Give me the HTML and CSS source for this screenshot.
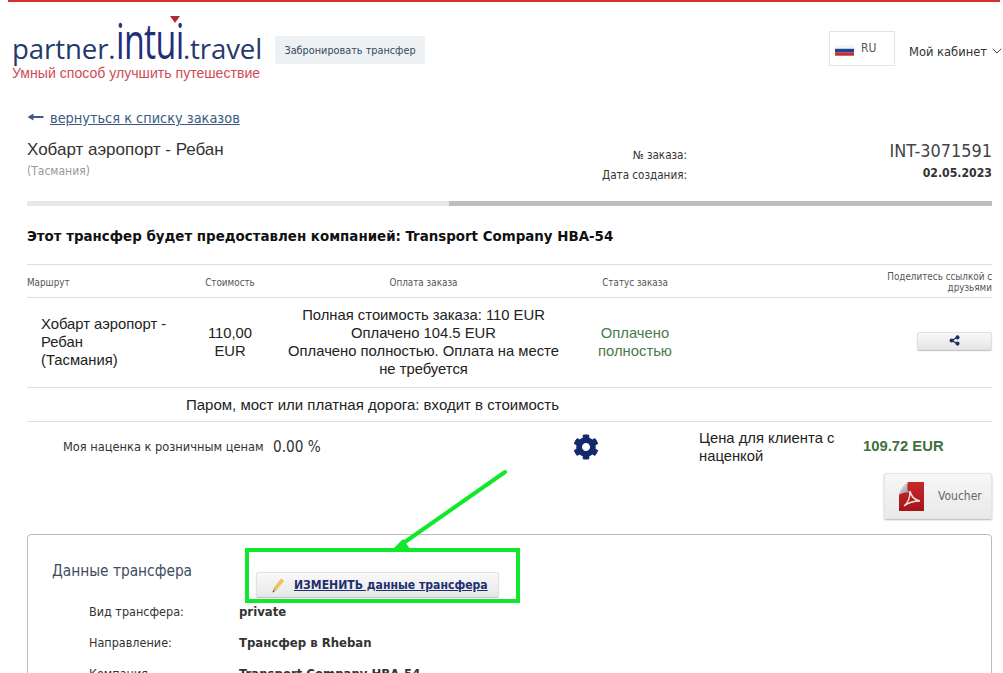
FILE: index.html
```html
<!DOCTYPE html>
<html lang="ru">
<head>
    <meta charset="UTF-8">
    <title>partner.intui.travel</title>
    <link rel="stylesheet" href="styles.css">
</head>
<body>
    <div class="top-line"></div>

    <header class="header">
        <a class="logo">
            <span class="logo-name">partner.<span class="logo-intui">intui</span>.travel</span>
            <span class="logo-slogan">Умный способ улучшить путешествие</span>
        </a>
        <a class="book-button">Забронировать трансфер</a>
        <div class="lang">
            <svg class="flag" viewBox="0 0 20 11"><rect width="20" height="3.7" fill="#f4f4f6"/><rect y="3.7" width="20" height="3.7" fill="#24408e"/><rect y="7.4" width="20" height="3.6" fill="#c0303a"/></svg>
            <span>RU</span>
        </div>
        <div class="cabinet">Мой кабинет
            <svg class="chevron" viewBox="0 0 10 6"><path d="M.7.8 5 5l4.3-4.2" fill="none" stroke="#444" stroke-width="1"/></svg>
        </div>
    </header>

    <main class="content">
        <a class="back-link">
            <svg class="back-arrow" viewBox="0 0 16 10"><path d="M0 5 6 1.5V4H16V6H6V8.5Z" fill="#3f5c85"/></svg>
            <span>вернуться к списку заказов</span>
        </a>

        <div class="order-head">
            <div class="order-title">
                <div class="order-route">Хобарт аэропорт - Ребан</div>
                <div class="order-region">(Тасмания)</div>
            </div>
            <div class="order-labels">
                <div>№ заказа:</div>
                <div>Дата создания:</div>
            </div>
            <div class="order-values">
                <div class="order-number">INT-3071591</div>
                <div class="order-date">02.05.2023</div>
            </div>
        </div>

        <div class="progress"><div class="progress-done"></div></div>

        <h2 class="company">Этот трансфер будет предоставлен компанией: Transport Company HBA-54</h2>

        <table class="order-table">
            <tr class="head-row">
                <th class="col-route">Маршрут</th>
                <th class="col-cost">Стоимость</th>
                <th class="col-pay">Оплата заказа</th>
                <th class="col-status">Статус заказа</th>
                <th class="col-share">Поделитесь ссылкой с друзьями</th>
            </tr>
            <tr class="main-row">
                <td class="route-cell">Хобарт аэропорт - Ребан<br>(Тасмания)</td>
                <td>110,00 EUR</td>
                <td>Полная стоимость заказа: 110 EUR<br>Оплачено 104.5 EUR<br>Оплачено полностью. Оплата на месте не требуется</td>
                <td class="status-cell">Оплачено полностью</td>
                <td class="share-cell">
                    <a class="share-button">
                        <svg class="share-icon" viewBox="0 0 12 12"><path d="M3 6 9 2.6M3 6 9 9.4" stroke="#1b2f6b" stroke-width="1.3"/><circle cx="2.8" cy="6" r="2.2" fill="#1b2f6b"/><circle cx="9.3" cy="2.6" r="2.2" fill="#1b2f6b"/><circle cx="9.3" cy="9.4" r="2.2" fill="#1b2f6b"/></svg>
                    </a>
                </td>
            </tr>
            <tr class="extra-row">
                <td colspan="5"><span>Паром, мост или платная дорога: входит в стоимость</span></td>
            </tr>
        </table>

        <div class="markup">
            <div class="markup-label">Моя наценка к розничным ценам</div>
            <div class="markup-value">0.00 %</div>
            <svg class="gear" viewBox="0 0 512 512"><path fill="#14296b" d="M487.4 315.7l-42.6-24.6c4.3-23.2 4.3-47 0-70.2l42.6-24.6c4.9-2.8 7.1-8.6 5.5-14-11.1-35.6-30-67.8-54.7-94.6-3.8-4.1-10-5.1-14.8-2.3L380.8 110c-17.9-15.4-38.5-27.3-60.8-35.1V25.8c0-5.6-3.9-10.5-9.4-11.7-36.7-8.2-74.3-7.8-109.2 0-5.5 1.2-9.4 6.1-9.4 11.7V75c-22.2 7.9-42.8 19.8-60.8 35.1L88.7 85.5c-4.9-2.8-11-1.9-14.8 2.3-24.7 26.7-43.6 58.9-54.7 94.6-1.7 5.4.6 11.2 5.5 14L67.3 221c-4.3 23.2-4.3 47 0 70.2l-42.6 24.6c-4.9 2.8-7.1 8.6-5.5 14 11.1 35.6 30 67.8 54.7 94.6 3.8 4.1 10 5.1 14.8 2.3l42.6-24.6c17.9 15.4 38.5 27.3 60.8 35.1v49.2c0 5.6 3.9 10.5 9.4 11.7 36.7 8.2 74.3 7.8 109.2 0 5.5-1.2 9.4-6.1 9.4-11.7v-49.2c22.2-7.9 42.8-19.8 60.8-35.1l42.6 24.6c4.9 2.8 11 1.9 14.8-2.3 24.7-26.7 43.6-58.9 54.7-94.6 1.5-5.5-.7-11.3-5.6-14.1zM256 336c-44.1 0-80-35.9-80-80s35.9-80 80-80 80 35.9 80 80-35.9 80-80 80z"/></svg>
            <div class="client-label">Цена для клиента с наценкой</div>
            <div class="client-price">109.72 EUR</div>
        </div>

        <div class="voucher-row">
            <a class="voucher">
                <svg class="pdf-icon" viewBox="0 0 25 29">
                    <defs>
                        <linearGradient id="pdf-red" x1="0" y1="0" x2="0" y2="1"><stop offset="0" stop-color="#c62a2a"/><stop offset="1" stop-color="#a5141a"/></linearGradient>
                        <linearGradient id="pdf-curl" x1="0" y1="0" x2="1" y2="1"><stop offset="0" stop-color="#efefef"/><stop offset="1" stop-color="#8f8f8f"/></linearGradient>
                    </defs>
                    <path d="M0 29V12L9 0H25V29Z" fill="url(#pdf-red)"/>
                    <path d="M0 13C1 7 5 3 9 0 8 4 8 8 10 11 6 10 3 11 0 13Z" fill="url(#pdf-curl)"/>
                    <path d="M5 24C9 21 11 15 11 9 12 14 15 18 21 19 15 19 10 20 5 24Z" fill="none" stroke="#f6e4e0" stroke-width="1.4"/>
                </svg>
                <span>Voucher</span>
            </a>
        </div>

        <section class="panel">
            <div class="panel-head">
                <h3 class="panel-title">Данные трансфера</h3>
                <a class="edit-button">
                    <svg class="pencil" viewBox="0 0 14 16">
                        <path d="M3 10.5 10 1.5 13.2 4 5.5 13Z" fill="#eec25c"/>
                        <path d="M3 10.5 1.5 15.5 5.5 13Z" fill="#c9a675"/>
                        <path d="M2.1 13.5 1.5 15.5 3.6 14.3Z" fill="#444"/>
                    </svg>
                    <span>ИЗМЕНИТЬ данные трансфера</span>
                </a>
            </div>
            <dl class="details">
                <dt>Вид трансфера:</dt><dd>private</dd>
                <dt>Направление:</dt><dd>Трансфер в Rheban</dd>
                <dt>Компания</dt><dd>Transport Company HBA-54</dd>
            </dl>
        </section>
    </main>

    <!-- зелёная пометка поверх скриншота -->
    <svg class="annotation" viewBox="0 0 1003 673">
        <rect x="247" y="550" width="271" height="51" fill="none" stroke="#10e82c" stroke-width="4"/>
        <path d="M505 472 402 544" stroke="#10e82c" stroke-width="4" stroke-linecap="round"/>
        <path d="M390 552 403 539 410 549Z" fill="#10e82c"/>
    </svg>
</body>
</html>
```

FILE: styles.css
```css
html {
    height: 673px;
    overflow: hidden;
}

body {
    margin: 0;
    height: 673px;
    overflow: hidden;
    position: relative;
    background: #fff;
    color: #222;
    font-family: "Liberation Sans", Arial, sans-serif;
    font-size: 15px;
}

a {
    cursor: pointer;
}

.top-line {
    height: 2px;
    margin: 0 3px 0 8px;
    background: #d5302a;
}

.header {
    display: flex;
    align-items: flex-start;
    height: 104px;
    padding-left: 12px;
}

.logo {
    display: flex;
    flex-direction: column;
    position: relative;
    width: 263px;
    padding-top: 14px;
}

/* красный треугольник над логотипом */
.logo::after {
    content: "";
    position: absolute;
    top: 14px;
    left: 158px;
    border-top: 7px solid #b02a37;
    border-left: 5px solid transparent;
    border-right: 5px solid transparent;
}

.logo-name {
    display: block;
    height: 50px;
    line-height: 64px;
    font-family: "Open Sans", sans-serif;
    font-size: 27.6px;
    letter-spacing: -0.1px;
    color: #24396b;
    white-space: nowrap;
}

.logo-intui {
    display: inline-block;
    font-size: 50px;
    line-height: 40px;
    letter-spacing: -1px;
    color: #1f2f7a;
    transform: scaleX(0.68);
    transform-origin: left;
    margin: 0 -33px 0 1px;
}

.logo-slogan {
    margin-top: -1px;
    color: #cf4b58;
    font-size: 14.1px;
    white-space: nowrap;
}

.book-button {
    width: 150px;
    height: 28px;
    margin-top: 34px;
    background: #eef1f4;
    border-radius: 2px;
    color: #34495e;
    font-family: "DejaVu Sans Condensed", "DejaVu Sans", sans-serif;
    font-size: 10.8px;
    line-height: 30px;
    text-align: center;
}

.lang {
    display: flex;
    align-items: center;
    gap: 7px;
    width: 59px;
    height: 33px;
    margin: 29px 14px 0 404px;
    padding-left: 5px;
    border: 1px solid #e4e4e4;
    color: #555;
    font-family: "DejaVu Sans Condensed", "DejaVu Sans", sans-serif;
    font-size: 12px;
}

.flag {
    width: 19px;
    height: 11px;
    margin-top: 4px;
}

.lang span {
    margin-top: -1px;
}

.cabinet {
    margin-top: 42px;
    color: #333;
    font-family: "DejaVu Sans Condensed", "DejaVu Sans", sans-serif;
    font-size: 12.8px;
    white-space: nowrap;
}

.chevron {
    width: 10px;
    height: 6px;
    margin: 0 0 2px 1px;
}

.content {
    padding: 0 11px 0 27px;
}

.back-link {
    display: flex;
    align-items: center;
    gap: 6px;
    height: 24px;
    color: #3a5a80;
    font-family: "DejaVu Sans Condensed", "DejaVu Sans", sans-serif;
    font-size: 14.4px;
    text-decoration: underline;
}

.back-arrow {
    width: 17px;
    height: 10px;
    margin-bottom: 3px;
}

.order-head {
    display: flex;
    height: 61px;
    margin-top: 8px;
    padding-top: 2px;
}

.order-title {
    width: 500px;
}

.order-route {
    font-size: 17px;
    line-height: 20px;
    color: #333;
}

.order-region {
    margin-top: 4px;
    color: #999;
    font-family: "DejaVu Sans Condensed", "DejaVu Sans", sans-serif;
    font-size: 12px;
}

.order-labels {
    width: 160px;
    padding-top: 5px;
    color: #333;
    font-family: "DejaVu Sans Condensed", "DejaVu Sans", sans-serif;
    font-size: 11.6px;
    line-height: 20px;
    text-align: right;
}

.order-values {
    flex: 1;
    margin-top: -1px;
    text-align: right;
    font-family: "DejaVu Sans Condensed", "DejaVu Sans", sans-serif;
}

.order-number {
    font-size: 17.9px;
    line-height: 24px;
    color: #444;
}

.order-date {
    margin-top: 3px;
    font-size: 12.2px;
    font-weight: bold;
    color: #333;
}

.progress {
    height: 5px;
    background: #e8e8e8;
}

.progress-done {
    height: 5px;
    margin-left: 422px;
    background: #bdbdbd;
}

.company {
    margin: 21px 0 19px;
    color: #111;
    font-family: "DejaVu Sans Condensed", "DejaVu Sans", sans-serif;
    font-size: 14.9px;
    line-height: 18px;
    font-weight: bold;
}

.order-table {
    width: 100%;
    table-layout: fixed;
    border-collapse: collapse;
    border-top: 1px solid #ddd;
}

.head-row th {
    height: 33px;
    padding: 2px 0 0;
    box-sizing: border-box;
    border-bottom: 1px solid #ddd;
    color: #555;
    font-family: "DejaVu Sans Condensed", "DejaVu Sans", sans-serif;
    font-size: 9.8px;
    line-height: 11px;
    font-weight: normal;
    text-align: center;
}

.col-route {
    width: 151px;
}

.head-row th.col-route {
    text-align: left;
}

.col-cost {
    width: 104px;
}

.col-pay {
    width: 283px;
}

.col-status {
    width: 140px;
}

.head-row th.col-share {
    padding-left: 176px;
    text-align: right;
}

.main-row td {
    height: 86px;
    padding: 0 0 1px;
    border-bottom: 1px solid #ddd;
    font-size: 14.8px;
    line-height: 18px;
    text-align: center;
}

.main-row td:nth-child(2) {
    padding: 0 26px 1px;
}

.main-row td:nth-child(3) {
    padding: 0 4px 1px;
}

.main-row td:nth-child(4) {
    padding: 0 20px 1px;
}

.main-row .route-cell {
    padding-left: 14px;
    text-align: left;
}

.main-row .status-cell {
    color: #4a7a4a;
}

.main-row .share-cell {
    padding-bottom: 3px;
    text-align: right;
}

.share-button {
    display: inline-flex;
    align-items: center;
    justify-content: center;
    width: 75px;
    height: 18px;
    background: linear-gradient(#f8f8f8, #e6e6e6);
    border: 1px solid #e0e0e0;
    border-radius: 2px;
    box-shadow: 0 1px 1px rgba(0, 0, 0, 0.25);
    box-sizing: border-box;
}

.share-icon {
    width: 11px;
    height: 11px;
}

.extra-row td {
    height: 33px;
    padding: 0 0 0 159px;
    border-bottom: 1px solid #ddd;
    font-size: 15px;
}

.markup {
    display: flex;
    align-items: center;
    height: 49px;
}

.markup-label {
    width: 201px;
    margin-left: 36px;
    color: #333;
    font-family: "DejaVu Sans Condensed", "DejaVu Sans", sans-serif;
    font-size: 12.7px;
    white-space: nowrap;
}

.markup-value {
    width: 300px;
    margin-left: 9px;
    font-family: "DejaVu Sans Condensed", "DejaVu Sans", sans-serif;
    font-size: 15.2px;
    color: #333;
}

.gear {
    width: 26px;
    height: 26px;
    margin-right: 100px;
}

.client-label {
    width: 145px;
    margin-right: 19px;
    font-size: 14.8px;
    line-height: 18px;
}

.client-price {
    margin-bottom: 2px;
    color: #3f7040;
    font-size: 14.8px;
    font-weight: bold;
}

.voucher-row {
    display: flex;
    justify-content: flex-end;
    margin-top: 2px;
}

.voucher {
    display: flex;
    align-items: center;
    gap: 14px;
    width: 108px;
    height: 46px;
    padding-left: 14px;
    box-sizing: border-box;
    background: linear-gradient(#f7f7f7, #e9e9e9);
    border: 1px solid #e6e6e6;
    border-radius: 2px;
    box-shadow: 0 1px 2px rgba(0, 0, 0, 0.3);
    color: #666;
    font-family: "DejaVu Sans Condensed", "DejaVu Sans", sans-serif;
    font-size: 12px;
}

.pdf-icon {
    width: 25px;
    height: 29px;
}

.panel {
    margin-top: 15px;
    height: 200px;
    padding: 0 24px;
    border: 1px solid #bbb;
    border-radius: 4px;
}

.panel-head {
    display: flex;
    align-items: flex-start;
    height: 61px;
}

.panel-title {
    width: 204px;
    margin: 27px 0 0;
    color: #3e4c5e;
    font-family: "DejaVu Sans Condensed", "DejaVu Sans", sans-serif;
    font-size: 15.3px;
    font-weight: normal;
}

.edit-button {
    display: flex;
    align-items: center;
    gap: 9px;
    width: 243px;
    height: 25px;
    margin-top: 37px;
    padding-left: 14px;
    box-sizing: border-box;
    background: linear-gradient(#f9f9f9, #e8e8e8);
    border: 1px solid #e2e2e2;
    border-radius: 2px;
    box-shadow: 0 1px 1px rgba(0, 0, 0, 0.25);
    color: #1d2f6f;
    font-family: "DejaVu Sans Condensed", "DejaVu Sans", sans-serif;
    font-size: 12.1px;
    font-weight: bold;
    text-decoration: underline;
    white-space: nowrap;
}

.pencil {
    width: 14px;
    height: 16px;
}

.details {
    display: grid;
    grid-template-columns: 150px 1fr;
    grid-auto-rows: 31px;
    margin: 8px 0 0 37px;
    font-family: "DejaVu Sans Condensed", "DejaVu Sans", sans-serif;
    font-size: 12.5px;
    line-height: 16px;
}

.details dt {
    color: #333;
}

.details dd {
    margin: 0;
    color: #333;
    font-size: 13px;
    font-weight: bold;
}

.annotation {
    position: absolute;
    top: 0;
    left: 0;
    width: 1003px;
    height: 673px;
    pointer-events: none;
}
```
